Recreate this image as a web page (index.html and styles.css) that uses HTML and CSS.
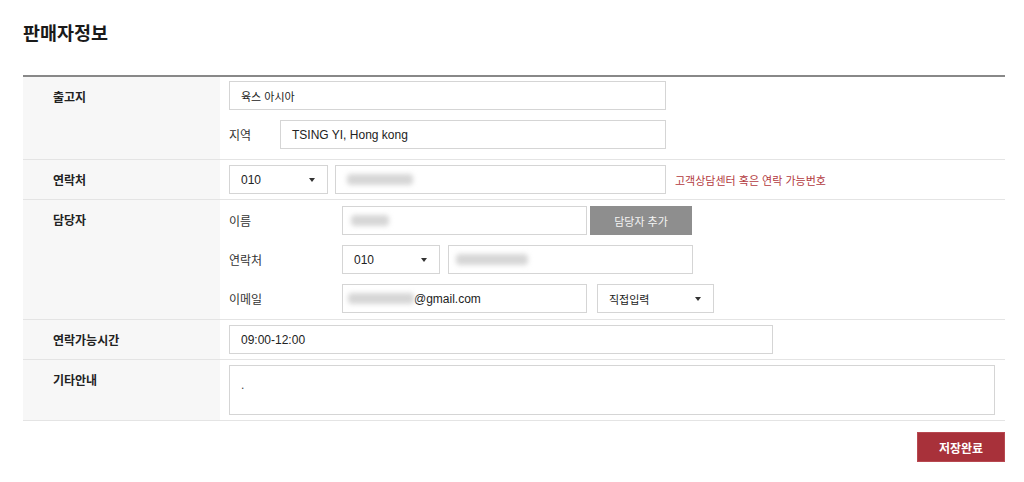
FILE: index.html
```html
<!DOCTYPE html>
<html lang="ko">
<head>
<meta charset="utf-8">
<title>판매자정보</title>
<link rel="stylesheet" href="styles.css">
</head>
<body>
<div class="page">
  <h1 class="title">판매자정보</h1>
  <div class="table">
    <div class="row">
      <div class="label">출고지</div>
      <div class="cell cell-r1">
        <div class="field w437"><span class="ko">육스 아시아</span></div>
        <div class="line">
          <span class="sublabel w51">지역</span>
          <div class="field w386">TSING YI, Hong kong</div>
        </div>
      </div>
    </div>
    <div class="row">
      <div class="label">연락처</div>
      <div class="cell">
        <div class="line">
          <div class="field select w99">010<i class="caret"></i></div>
          <div class="field w331 ml7"><span class="blur b66"></span></div>
          <span class="notice">고객상담센터 혹은 연락 가능번호</span>
        </div>
      </div>
    </div>
    <div class="row">
      <div class="label">담당자</div>
      <div class="cell cell-r3">
        <div class="line">
          <span class="sublabel w113">이름</span>
          <div class="field w245"><span class="blur b38"></span></div>
          <button class="btn-gray">담당자 추가</button>
        </div>
        <div class="line">
          <span class="sublabel w113">연락처</span>
          <div class="field select w98">010<i class="caret"></i></div>
          <div class="field w245 ml8"><span class="blur b72"></span></div>
        </div>
        <div class="line">
          <span class="sublabel w113">이메일</span>
          <div class="field w245 email"><span class="blur b66"></span>@gmail.com</div>
          <div class="field select w117 ml10"><span class="ko">직접입력</span><i class="caret"></i></div>
        </div>
      </div>
    </div>
    <div class="row">
      <div class="label">연락가능시간</div>
      <div class="cell">
        <div class="field w544">09:00-12:00</div>
      </div>
    </div>
    <div class="row">
      <div class="label">기타안내</div>
      <div class="cell">
        <div class="textarea">.</div>
      </div>
    </div>
  </div>
  <div class="actions">
    <button class="btn-save">저장완료</button>
  </div>
</div>
</body>
</html>
```

FILE: styles.css
```css
* { box-sizing: border-box; }
body {
  margin: 0;
  background: #fff;
  font-family: "Liberation Sans", "Noto Sans CJK KR", sans-serif;
  color: #222;
}
.page {
  padding: 0 19px 0 23px;
}
.title {
  margin: 20px 0 0;
  height: 24px;
  line-height: 24px;
  font-family: "Noto Sans CJK KR", sans-serif;
  font-size: 18.5px;
  font-weight: 700;
  color: #1a1a1a;
}
.table {
  margin-top: 31px;
  border-top: 2px solid #888;
}
.row {
  display: flex;
  border-bottom: 1px solid #e4e4e4;
}
.label {
  width: 197px;
  flex: none;
  background: #f7f7f7;
  padding: 12px 0 0 30px;
  font-family: "Noto Sans CJK KR", sans-serif;
  font-size: 12px;
  font-weight: 700;
  line-height: 16px;
  color: #222;
}
.cell {
  flex: 1;
  padding: 5px 0 5px 9px;
  display: flex;
  flex-direction: column;
  gap: 10px;
}
.cell-r1 { padding-top: 4px; padding-bottom: 10px; }
.cell-r3 { padding-top: 6px; padding-bottom: 6px; }
.line {
  display: flex;
  align-items: center;
}
.sublabel {
  flex: none;
  font-family: "Noto Sans CJK KR", sans-serif;
  font-size: 12px;
  color: #333;
}
.field {
  flex: none;
  height: 29px;
  border: 1px solid #d5d5d5;
  background: #fff;
  display: flex;
  align-items: center;
  padding: 0 11px;
  font-size: 12px;
  color: #222;
}
.ko {
  font-family: "Noto Sans CJK KR", sans-serif;
  font-size: 11px;
}
.select { justify-content: space-between; padding-right: 12px; }
.caret {
  width: 0;
  height: 0;
  border-left: 3.5px solid transparent;
  border-right: 3.5px solid transparent;
  border-top: 4px solid #333;
}
.email { padding-left: 5px; }
.blur {
  display: inline-block;
  height: 11px;
  background: #d6d6d6;
  border-radius: 4px;
  filter: blur(2.5px);
}
.b66 { width: 66px; }
.b38 { width: 38px; margin-left: -3px; }
.b72 { width: 72px; margin-left: -4px; }
.w51 { width: 51px; }
.w113 { width: 113px; }
.w437 { width: 437px; }
.w386 { width: 386px; }
.w99 { width: 99px; }
.w98 { width: 98px; }
.w117 { width: 117px; }
.w331 { width: 331px; }
.w245 { width: 245px; }
.w544 { width: 544px; }
.ml7 { margin-left: 7px; }
.ml8 { margin-left: 8px; }
.ml10 { margin-left: 10px; }
.notice {
  margin-left: 9px;
  font-family: "Noto Sans CJK KR", sans-serif;
  font-size: 11px;
  color: #b33a40;
}
.btn-gray {
  margin-left: 3px;
  width: 102px;
  height: 29px;
  border: 0;
  background: #8e8e8e;
  color: #f4f4f4;
  font-family: "Noto Sans CJK KR", sans-serif;
  font-size: 11px;
  padding: 0;
}
.textarea {
  width: 766px;
  height: 50px;
  border: 1px solid #d5d5d5;
  padding: 12px 11px;
  font-size: 12px;
  line-height: 14px;
  color: #444;
}
.actions {
  display: flex;
  justify-content: flex-end;
  margin-top: 11px;
}
.btn-save {
  width: 88px;
  height: 30px;
  border: 1px solid #b84850;
  background: #a8313a;
  color: #fff;
  font-family: "Noto Sans CJK KR", sans-serif;
  font-size: 12px;
  font-weight: 700;
  padding: 0;
}
```
